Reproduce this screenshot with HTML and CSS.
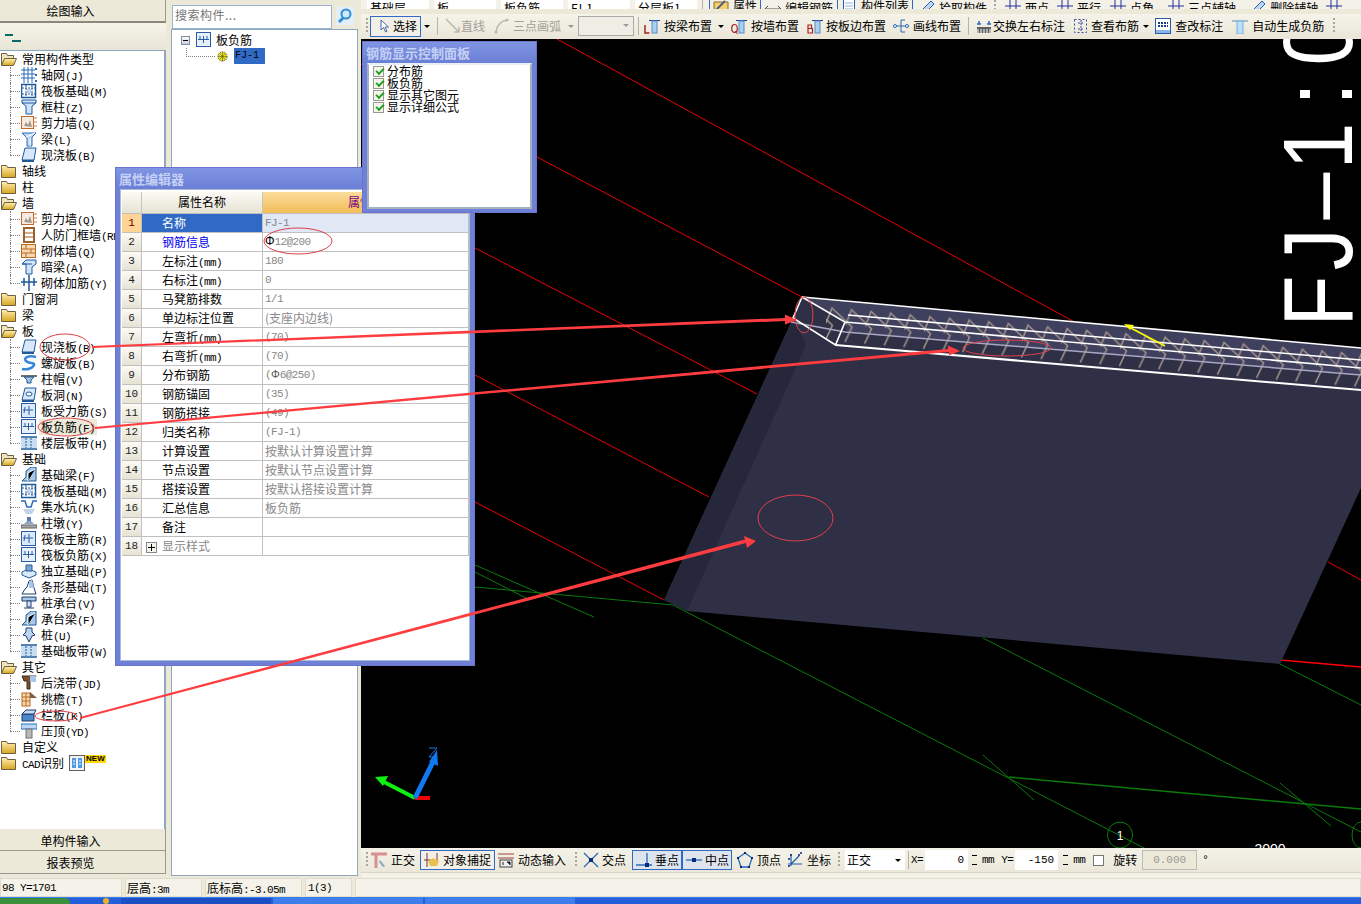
FILE: index.html
```html
<!DOCTYPE html>
<html lang="zh">
<head>
<meta charset="utf-8">
<title>钢筋显示控制面板</title>
<link rel="stylesheet" href="styles.css">
</head>
<body>
<svg class="defs" width="0" height="0" aria-hidden="true">
  <defs>
    <linearGradient id="fy" x1="0" y1="0" x2="0" y2="1"><stop offset="0" stop-color="#fff0b0"/><stop offset="1" stop-color="#d9a520"/></linearGradient>
    <symbol id="folder" viewBox="0 0 16 16"><path d="M.5 4.5V2.5h5l1 2h8v10H.5z" fill="url(#fy)" stroke="#6b6040"/></symbol>
    <symbol id="open" viewBox="0 0 16 16"><path d="M.5 14.500V2.500h5l1 2h6v3" fill="#f0e4b8" stroke="#6b6040"/><path d="M.5 14.500l3-7h12l-3 7z" fill="url(#fy)" stroke="#6b6040"/></symbol>
    <symbol id="grid" viewBox="0 0 16 16"><path d="M3 0v16M7 0v16M11 0v16M0 3h14M0 7h14M0 11h14" stroke="#2a6ab8" fill="none"/><path d="M14 1h2v2h-2zM14 7h2v2h-2zM14 13h2v2h-2z" fill="#2a6ab8"/></symbol>
    <symbol id="raft" viewBox="0 0 16 16"><rect x=".5" y="1.500" width="14" height="13" fill="#fff" stroke="#1e5a9a" stroke-width="1.500"/><path d="M1 5h13M1 11h13M5 2v12M11 2v12" stroke="#1e5a9a" stroke-dasharray="2 1" fill="none"/><rect x="6" y="6" width="4" height="4" fill="#bcd4f0"/></symbol>
    <symbol id="col" viewBox="0 0 16 16"><path d="M1 1h14v3L11 7v8H5V7L1 4z" fill="#cfe2f7" stroke="#1e5a9a"/><path d="M1 4h14" stroke="#1e5a9a"/></symbol>
    <symbol id="wall" viewBox="0 0 16 16"><rect x=".5" y="1.500" width="12" height="12" fill="#f4ece4" stroke="#c06a30"/><path d="M3 11l2-4 2 3 2-5 2 7z" fill="#a89888"/><path d="M13 3h3M13 7h3M13 11h3" stroke="#e08030"/></symbol>
    <symbol id="beam" viewBox="0 0 16 16"><path d="M1 2h14l-4 4v9H6V7z" fill="#bcd8f4" stroke="#2a6ab8"/><path d="M5 6l9-4M9 7v8" stroke="#fff"/></symbol>
    <symbol id="slab" viewBox="0 0 16 16"><path d="M4 1h11l-2 12H1z" fill="#d8e8fa" stroke="#1e5a9a"/><path d="M1 13h12v2H1z" fill="#1e5a9a"/></symbol>
    <symbol id="rebar" viewBox="0 0 16 16"><rect x=".5" y=".5" width="14" height="14" fill="#e6f0fb" stroke="#2a5ca8"/><path d="M2 7.500h11M7.500 4v7M4 4v3M11 4v3" stroke="#2a5ca8" fill="none"/></symbol>
    <symbol id="door" viewBox="0 0 16 16"><path d="M3 1h10v14H3z" fill="#fff" stroke="#a0602a" stroke-width="2"/><path d="M4 6h8M4 10h8" stroke="#a0602a"/></symbol>
    <symbol id="brick" viewBox="0 0 16 16"><rect x=".5" y="1.500" width="14" height="13" fill="#f8d8b0" stroke="#b86a28"/><path d="M1 6h13M1 10h13M5 2v4M10 6v4M5 10v4" stroke="#b86a28"/></symbol>
    <symbol id="lintel" viewBox="0 0 16 16"><path d="M1 5l4-4h10v4l-4 3v7H5V5z" fill="#d0e4f8" stroke="#1e5a9a"/><path d="M1 5h10" stroke="#1e5a9a"/></symbol>
    <symbol id="wrebar" viewBox="0 0 16 16"><path d="M0 7h16M8 0v16M3 3v8M13 3v8" stroke="#1e5a9a" stroke-width="1.500" fill="none"/></symbol>
    <symbol id="spiral" viewBox="0 0 16 16"><path d="M15 2C7 0 2 3 5 6s9 1 8 4-6 5-12 4" fill="none" stroke="#3a86d8" stroke-width="2.500"/></symbol>
    <symbol id="cap" viewBox="0 0 16 16"><path d="M0 4h16v2H0z" fill="#707070"/><path d="M3 6h10l-3 3v3H6V9z" fill="#a8c4e4" stroke="#1e5a9a"/></symbol>
    <symbol id="hole" viewBox="0 0 16 16"><path d="M4 1h11l-2 12H1z" fill="#d8e8fa" stroke="#1e5a9a"/><path d="M1 13h12v2H1z" fill="#1e5a9a"/><ellipse cx="8" cy="7" rx="3" ry="2" fill="#fff" stroke="#1e5a9a"/></symbol>
    <symbol id="force" viewBox="0 0 16 16"><rect x=".5" y=".5" width="14" height="14" fill="#dbe9f8" stroke="#2a5ca8"/><path d="M2 7h10M8 3v9M4 4l-1 6" stroke="#2a5ca8" fill="none"/></symbol>
    <symbol id="band" viewBox="0 0 16 16"><path d="M0 2h16M0 14h16" stroke="#1e5a9a" stroke-width="1.500"/><rect x="0" y="3" width="16" height="10" fill="#c8dcf2"/><path d="M5 3v10M10 3v10" stroke="#1e5a9a" stroke-dasharray="2 1"/></symbol>
    <symbol id="fbeam" viewBox="0 0 16 16"><path d="M1 14l4-4V4l5-4h5v14z" fill="#a8c8ea" stroke="#1e5a9a"/><path d="M7 14V6l7-4" stroke="#fff"/></symbol>
    <symbol id="pit" viewBox="0 0 16 16"><path d="M0 2h4l2 6h4l2-6h4" fill="none" stroke="#2a6ab8" stroke-width="1.500"/><path d="M2 10h12l-3 5H5z" fill="#c0d4ea"/></symbol>
    <symbol id="pier" viewBox="0 0 16 16"><path d="M6 2h4v4H6z" fill="#5a7ca8"/><path d="M3 9l3-3h4l3 3z" fill="#8aa4c4"/><path d="M0 10h16v3H0z" fill="#a8a8a8" stroke="#606060"/></symbol>
    <symbol id="found" viewBox="0 0 16 16"><path d="M1 9l6-3 8 3v3l-7 3-7-3z" fill="#dbe9f8" stroke="#1e5a9a"/><path d="M5 8V2h6v6z" fill="#7ca4d0" stroke="#1e5a9a"/></symbol>
    <symbol id="strip" viewBox="0 0 16 16"><path d="M1 15l3-5 2-2 2-6 3-1 2 8 2 6z" fill="#fff" stroke="#1e3a6a"/><path d="M8 2l3-1 2 8H8z" fill="#a8c8ea"/></symbol>
    <symbol id="pile" viewBox="0 0 16 16"><path d="M1 2h14v4H1z" fill="#a8c8ea" stroke="#1e3a6a"/><path d="M6 6h4v6H6zM3 13h10" fill="#cfe2f7" stroke="#1e3a6a"/></symbol>
    <symbol id="piles" viewBox="0 0 16 16"><path d="M5 1h6v4l3 3-3 1-3 6-3-6-3-1 3-3z" fill="#bcd4f0" stroke="#1e3a6a"/></symbol>
    <symbol id="post" viewBox="0 0 16 16"><path d="M1 1h14l-2 5H9v8H6V6H3z" fill="#7c5030" stroke="#3a2a20"/><path d="M9 1h6v6H9z" fill="#a8c8ea"/></symbol>
    <symbol id="eave" viewBox="0 0 16 16"><rect x="1" y="2" width="8" height="13" fill="#f8d8b0" stroke="#b86a28"/><path d="M1 6h8M1 10h8M5 2v13" stroke="#b86a28"/><path d="M9 1l7 6h-7z" fill="#806040"/></symbol>
    <symbol id="rail" viewBox="0 0 16 16"><path d="M1 7h12v7H1z" fill="#4a88c8" stroke="#1e3a6a"/><path d="M1 7l4-4h10l-2 4z" fill="#c8dcf2" stroke="#1e3a6a"/></symbol>
    <symbol id="coping" viewBox="0 0 16 16"><rect x="0" y="1" width="16" height="5" fill="#bcd8f4" stroke="#1e70c8"/><rect x="5" y="6" width="6" height="9" fill="#b8b8b8" stroke="#707070"/></symbol>
    <symbol id="cad" viewBox="0 0 16 16"><rect x=".5" y=".5" width="15" height="15" fill="#f4f4f4" stroke="#606060"/><path d="M3 3h4v10H3zM9 3h4v10H9z" fill="#4a98e8"/><path d="M4 6h2M4 9h2M10 6h2M10 9h2" stroke="#fff"/></symbol>
    <symbol id="gear" viewBox="0 0 12 12"><circle cx="6" cy="6" r="5" fill="#e8e020" stroke="#505020" stroke-dasharray="1.500 1"/><path d="M1 6h10M6 1v10M3 3l6 6M9 3l-6 6" stroke="#505020" stroke-width=".6"/></symbol>
    <symbol id="search" viewBox="0 0 18 18"><rect width="18" height="18" fill="#e4eef8"/><circle cx="10" cy="7" r="4.500" fill="#cfe8fb" stroke="#2f8fd8" stroke-width="2"/><path d="M7 11l-4 4" stroke="#2f8fd8" stroke-width="3"/></symbol>
    <symbol id="cursor" viewBox="0 0 16 16"><path d="M5 2v10l2.500-2.500 2 4.500 1.500-.8-2-4.200h3.500z" fill="#fff" stroke="#4a6a9a"/></symbol>
    <symbol id="line" viewBox="0 0 16 16"><path d="M1 1l13 13M9 14h5V9" fill="none" stroke="#b8b8b0" stroke-width="1.500"/></symbol>
    <symbol id="arc" viewBox="0 0 16 16"><path d="M2 14C3 7 7 3 13 2" fill="none" stroke="#b8b8b0" stroke-width="1.500"/><circle cx="2" cy="14" r="1.500" fill="#b8b8b0"/><circle cx="13" cy="2" r="1.500" fill="#b8b8b0"/></symbol>
    <symbol id="tL" viewBox="0 0 16 16"><path d="M5 2.500h11" stroke="#1e3a8a"/><rect x="8" y="3" width="5" height="12" fill="#a8d0f0" stroke="#5a8ac8"/><path d="M1 7v8h4.500" fill="none" stroke="#a82020" stroke-width="1.500"/></symbol>
    <symbol id="tQ" viewBox="0 0 16 16"><path d="M5 2.500h11" stroke="#1e3a8a"/><rect x="8" y="3" width="5" height="12" fill="#a8d0f0" stroke="#5a8ac8"/><ellipse cx="3.500" cy="10.500" rx="2.800" ry="4" fill="none" stroke="#a82020" stroke-width="1.200"/><path d="M4 13l2.500 3" stroke="#a82020"/></symbol>
    <symbol id="tB" viewBox="0 0 16 16"><path d="M5 2.500h11" stroke="#1e3a8a"/><rect x="8" y="3" width="5" height="12" fill="#a8d0f0" stroke="#5a8ac8"/><path d="M1 7h3.500v3.500H1zM1 10.500h4.500V15H1z" fill="none" stroke="#a82020" stroke-width="1.200"/></symbol>
    <symbol id="tline" viewBox="0 0 16 16"><path d="M2 8h12M8 2v12M8 2h4M8 14h4" stroke="#2a6ab8" fill="none"/><circle cx="2" cy="8" r="1.500" fill="#fff" stroke="#2a6ab8"/><circle cx="14" cy="8" r="1.500" fill="#fff" stroke="#2a6ab8"/></symbol>
    <symbol id="swap" viewBox="0 0 16 16"><rect x="1" y="9" width="14" height="6" fill="#606060"/><path d="M2 11v4M5 11v4M8 11v4M11 11v4M14 11v4" stroke="#fff"/><path d="M1 6h4M11 6h4M13 3v3M3 3v3" stroke="#2a6ab8" stroke-width="1.500"/></symbol>
    <symbol id="view" viewBox="0 0 16 16"><rect x="1.500" y="1.500" width="12" height="13" fill="none" stroke="#3a4a9a" stroke-dasharray="2 2"/><path d="M8 2v12M5 5h5M5 11h5" stroke="#3a4a9a" stroke-dasharray="2 1"/></symbol>
    <symbol id="abc" viewBox="0 0 16 16"><rect x=".5" y=".5" width="15" height="15" fill="#fff" stroke="#2a5ca8"/><rect x="1" y="12" width="14" height="3" fill="#8ab4e8"/><path d="M3 5h10M3 8h10" stroke="#1e3a8a" stroke-width="2" stroke-dasharray="2 1"/></symbol>
    <symbol id="auto" viewBox="0 0 16 16"><path d="M0 3h16" stroke="#5a8ac8"/><rect x="5" y="3" width="6" height="13" fill="#b8e0f8" stroke="#7ab0d8"/></symbol>
    <symbol id="ortho" viewBox="0 0 16 16"><path d="M0 2h16M5 2v14" stroke="#d89090" stroke-width="3"/><path d="M9 8l5 6-2 1-4-5z" fill="#8aa8c8"/></symbol>
    <symbol id="snap" viewBox="0 0 16 16"><path d="M3 1v14M0 8h8M13 1v8" stroke="#803030"/><path d="M4 9l5-3 6 3-2 5H6z" fill="#e8c050"/></symbol>
    <symbol id="dyn" viewBox="0 0 16 16"><path d="M0 2h16M0 6h16" stroke="#a04040"/><rect x="2" y="8" width="12" height="7" fill="#f0f0f0" stroke="#404040"/><path d="M5 10v3M9 10h3v3" stroke="#202020"/></symbol>
    <symbol id="cross" viewBox="0 0 16 16"><path d="M1 1l14 14M15 1L1 15" stroke="#2a6ab8" stroke-width="1.300"/><rect x="6" y="6" width="4" height="4" fill="#0a2a7a"/></symbol>
    <symbol id="perp" viewBox="0 0 16 16"><path d="M0 13h16M11 1v12" stroke="#2a6ab8" stroke-width="1.300"/><rect x="9" y="11" width="4" height="4" fill="#0a2a7a"/></symbol>
    <symbol id="mid" viewBox="0 0 16 16"><path d="M0 8h16" stroke="#2a6ab8" stroke-width="1.300"/><rect x="6" y="6" width="4" height="4" fill="#0a2a7a"/></symbol>
    <symbol id="vert" viewBox="0 0 16 16"><path d="M8 1l7 5-3 9H4L1 6z" fill="none" stroke="#2a6ab8" stroke-width="1.300"/><path d="M7 0h2v2H7zM0 5h2v2H0zM14 5h2v2h-2zM3 14h2v2H3zM11 14h2v2h-2z" fill="#0a2a7a"/></symbol>
    <symbol id="coord" viewBox="0 0 16 16"><path d="M4 2v12M1 12h14M4 12l8-8" stroke="#1e5ab0" fill="none" stroke-width="1.200"/><path d="M3 3h2M11 3h2M13 1h2M1 7h2M1 14h2" stroke="#0a2a7a" stroke-width="1.500"/></symbol>
    <symbol id="prop" viewBox="0 0 16 16"><path d="M1 4h14v10H1z" fill="#f4d070" stroke="#8a6a20"/><path d="M3 12l9-9" stroke="#506080" stroke-width="2"/></symbol>
    <symbol id="edit" viewBox="0 0 16 16"><path d="M0 9h16M3 6L0 9l3 3M13 6l3 3-3 3" fill="none" stroke="#505050"/></symbol>
    <symbol id="list" viewBox="0 0 16 16"><rect x="2.500" y="1.500" width="11" height="13" fill="#fff" stroke="#2a5ca8"/><path d="M4 5h8M4 8h8M4 11h8" stroke="#8ab4e8"/></symbol>
    <symbol id="pick" viewBox="0 0 16 16"><path d="M2 14l2-5 8-8 3 3-8 8z" fill="#bcd8f4" stroke="#2a5ca8"/></symbol>
    <symbol id="aux" viewBox="0 0 16 16"><path d="M0 6h16M5 0v14M11 0v14" stroke="#22309a"/><circle cx="5" cy="12" r="1.500" fill="#d02020"/></symbol>
  </defs>
</svg>

<div class="app">
  <div class="main">
    <aside class="left">
      <div class="tab">绘图输入</div>
      <div class="mini">
        <svg class="miniico" viewBox="0 0 16 9" aria-hidden="true"><path d="M0 1h8M7 7h9" stroke="#0a6a6a" stroke-width="2"/></svg>
      </div>
      <ul class="tree">
        <li class="fold"><svg class="ic"><use href="#open"/></svg>常用构件类型</li>
        <li class="it"><svg class="ic"><use href="#grid"/></svg>轴网<span class="lt">(J)</span></li>
        <li class="it"><svg class="ic"><use href="#raft"/></svg>筏板基础<span class="lt">(M)</span></li>
        <li class="it"><svg class="ic"><use href="#col"/></svg>框柱<span class="lt">(Z)</span></li>
        <li class="it"><svg class="ic"><use href="#wall"/></svg>剪力墙<span class="lt">(Q)</span></li>
        <li class="it"><svg class="ic"><use href="#beam"/></svg>梁<span class="lt">(L)</span></li>
        <li class="it end"><svg class="ic"><use href="#slab"/></svg>现浇板<span class="lt">(B)</span></li>
        <li class="fold"><svg class="ic"><use href="#folder"/></svg>轴线</li>
        <li class="fold"><svg class="ic"><use href="#folder"/></svg>柱</li>
        <li class="fold"><svg class="ic"><use href="#open"/></svg>墙</li>
        <li class="it"><svg class="ic"><use href="#wall"/></svg>剪力墙<span class="lt">(Q)</span></li>
        <li class="it"><svg class="ic"><use href="#door"/></svg>人防门框墙<span class="lt">(RF)</span></li>
        <li class="it"><svg class="ic"><use href="#brick"/></svg>砌体墙<span class="lt">(Q)</span></li>
        <li class="it"><svg class="ic"><use href="#lintel"/></svg>暗梁<span class="lt">(A)</span></li>
        <li class="it end"><svg class="ic"><use href="#wrebar"/></svg>砌体加筋<span class="lt">(Y)</span></li>
        <li class="fold"><svg class="ic"><use href="#folder"/></svg>门窗洞</li>
        <li class="fold"><svg class="ic"><use href="#folder"/></svg>梁</li>
        <li class="fold"><svg class="ic"><use href="#open"/></svg>板</li>
        <li class="it"><svg class="ic"><use href="#slab"/></svg>现浇板<span class="lt">(B)</span></li>
        <li class="it"><svg class="ic"><use href="#spiral"/></svg>螺旋板<span class="lt">(B)</span></li>
        <li class="it"><svg class="ic"><use href="#cap"/></svg>柱帽<span class="lt">(V)</span></li>
        <li class="it"><svg class="ic"><use href="#hole"/></svg>板洞<span class="lt">(N)</span></li>
        <li class="it"><svg class="ic"><use href="#force"/></svg>板受力筋<span class="lt">(S)</span></li>
        <li class="it"><svg class="ic"><use href="#rebar"/></svg><span class="sel">板负筋<span class="lt">(F)</span></span></li>
        <li class="it end"><svg class="ic"><use href="#band"/></svg>楼层板带<span class="lt">(H)</span></li>
        <li class="fold"><svg class="ic"><use href="#open"/></svg>基础</li>
        <li class="it"><svg class="ic"><use href="#fbeam"/></svg>基础梁<span class="lt">(F)</span></li>
        <li class="it"><svg class="ic"><use href="#raft"/></svg>筏板基础<span class="lt">(M)</span></li>
        <li class="it"><svg class="ic"><use href="#pit"/></svg>集水坑<span class="lt">(K)</span></li>
        <li class="it"><svg class="ic"><use href="#pier"/></svg>柱墩<span class="lt">(Y)</span></li>
        <li class="it"><svg class="ic"><use href="#force"/></svg>筏板主筋<span class="lt">(R)</span></li>
        <li class="it"><svg class="ic"><use href="#rebar"/></svg>筏板负筋<span class="lt">(X)</span></li>
        <li class="it"><svg class="ic"><use href="#found"/></svg>独立基础<span class="lt">(P)</span></li>
        <li class="it"><svg class="ic"><use href="#strip"/></svg>条形基础<span class="lt">(T)</span></li>
        <li class="it"><svg class="ic"><use href="#pile"/></svg>桩承台<span class="lt">(V)</span></li>
        <li class="it"><svg class="ic"><use href="#fbeam"/></svg>承台梁<span class="lt">(F)</span></li>
        <li class="it"><svg class="ic"><use href="#piles"/></svg>桩<span class="lt">(U)</span></li>
        <li class="it end"><svg class="ic"><use href="#band"/></svg>基础板带<span class="lt">(W)</span></li>
        <li class="fold"><svg class="ic"><use href="#open"/></svg>其它</li>
        <li class="it"><svg class="ic"><use href="#post"/></svg>后浇带<span class="lt">(JD)</span></li>
        <li class="it"><svg class="ic"><use href="#eave"/></svg>挑檐<span class="lt">(T)</span></li>
        <li class="it"><svg class="ic"><use href="#rail"/></svg>栏板<span class="lt">(K)</span></li>
        <li class="it end"><svg class="ic"><use href="#coping"/></svg>压顶<span class="lt">(YD)</span></li>
        <li class="fold"><svg class="ic"><use href="#folder"/></svg>自定义</li>
        <li class="fold"><svg class="ic"><use href="#folder"/></svg><span class="lt">CAD</span>识别<svg class="ic cad"><use href="#cad"/></svg><span class="new">NEW</span></li>
      </ul>
      <div class="tab2">单构件输入</div>
      <div class="tab2">报表预览</div>
    </aside>

    <section class="mid">
      <div class="searchrow">
        <div class="search">搜索构件...</div>
        <svg class="searchbtn"><use href="#search"/></svg>
      </div>
      <div class="midtree">
        <div class="mrow">
          <span class="minus"></span>
          <svg class="ic rootic"><use href="#rebar"/></svg>
          <span>板负筋</span>
        </div>
        <div class="mrow child">
          <svg class="gear"><use href="#gear"/></svg>
          <span class="picked">FJ-1</span>
        </div>
      </div>
    </section>

    <section class="right">
      <div class="tb1">
        <span class="cb">基础层</span><span class="cb">板</span><span class="cb">板负筋</span><span class="cb">FJ-1</span><span class="cb">分层板1</span>
        <span class="sep"></span>
        <span class="ti btn t6"><svg class="ic"><use href="#prop"/></svg>属性</span>
        <span class="ti g4"><svg class="ic"><use href="#edit"/></svg>编辑钢筋</span>
        <span class="ti btn g4"><svg class="ic"><use href="#list"/></svg>构件列表</span>
        <span class="ti g6"><svg class="ic"><use href="#pick"/></svg>拾取构件</span>
        <span class="grip g7"></span>
        <span class="ti g9"><svg class="ic"><use href="#aux"/></svg>两点</span>
        <span class="ti g8"><svg class="ic"><use href="#aux"/></svg>平行</span>
        <span class="ti g9"><svg class="ic"><use href="#aux"/></svg>点角</span>
        <span class="ti g14"><svg class="ic"><use href="#aux"/></svg>三点辅轴</span>
        <span class="ti g14"><svg class="ic"><use href="#pick"/></svg>删除辅轴</span>
        <span class="ti g8"><svg class="ic"><use href="#aux"/></svg></span>
      </div>
      <div class="tb2">
        <span class="grip"></span>
        <span class="ti btn sel1 g2"><svg class="ic"><use href="#cursor"/></svg>选择</span>
        <span class="arrow g3"></span>
        <span class="sep g7"></span>
        <span class="ti off gp0 g7"><svg class="ic"><use href="#line"/></svg>直线</span>
        <span class="ti off gp3 g9"><svg class="ic"><use href="#arc"/></svg>三点画弧</span>
        <span class="arrow off g7"></span>
        <span class="combo g4"></span>
        <span class="sep g4"></span>
        <span class="ti g5"><svg class="ic"><use href="#tL"/></svg>按梁布置</span>
        <span class="arrow g6"></span>
        <span class="ti g7"><svg class="ic"><use href="#tQ"/></svg>按墙布置</span>
        <span class="ti gp3 g8"><svg class="ic"><use href="#tB"/></svg>按板边布置</span>
        <span class="ti g7"><svg class="ic"><use href="#tline"/></svg>画线布置</span>
        <span class="sep g7"></span>
        <span class="ti gp1 g7"><svg class="ic"><use href="#swap"/></svg>交换左右标注</span>
        <span class="ti gp2 g8"><svg class="ic"><use href="#view"/></svg>查看布筋</span>
        <span class="arrow g4"></span>
        <span class="ti g6"><svg class="ic"><use href="#abc"/></svg>查改标注</span>
        <span class="ti g9"><svg class="ic"><use href="#auto"/></svg>自动生成负筋</span>
        <span class="grip g9"></span>
      </div>
      <div class="canvas">
        <svg class="scene" viewBox="361 39 1000 809" aria-hidden="false">
          <defs>
            <pattern id="hooks" patternUnits="userSpaceOnUse" width="19.600" height="80" patternTransform="translate(826 300) skewY(5)">
              <path d="M0 23L6 7.500 26 24.700 19 40.300M-19.600 23L-13.600 7.500 6.400 24.700-.6 40.300" fill="none" stroke="#a3968c" stroke-width="1.500"/>
            </pattern>
          </defs>
          <g class="redl">
            <path d="M557 39L1080 325M361 64L802 297M475 248L757 394M475 375L709 497M475 502L664 600M1328 562L1361 580"/>
            <path class="thick" d="M1280 660L1361 667"/>
          </g>
          <g class="greenl">
            <path d="M475 565L594 617M475 572L530 600M475 587L673 605M673 605L1144 848M983 638L1361 832M1280 664L1361 705M983 755L1034 800M1280 783L1331 826"/>
            <path class="thick" d="M1009 777L1361 809"/>
            <ellipse cx="1120" cy="835" rx="12.500" ry="13" fill="none"/>
            <ellipse cx="1361" cy="835" rx="9" ry="13" fill="none"/>
          </g>
          <polygon class="sl" points="793,318 802,297 1361,348 1361,488 1280,664 687,611 664,600"/>
          <polygon class="sl2" points="793,318 806,345 687,611 664,600"/>
          <polygon class="sl3" points="802,297 1361,348 1361,375 847,332 845,322"/>
          <polygon fill="url(#hooks)" points="826,302 1361,349 1361,395 826,348"/>
          <path class="lav" d="M791 322L845 332L1361 375"/>
          <g class="wh">
            <path d="M802 297L1361 348M848 315L1361 360M845 322L1361 368M802 297L845 322L835.500 345L793 318L802 297"/>
            <path class="wb" d="M835.500 345L1361 390"/>
          </g>
          <path class="yel" d="M1127 326L1165 346"/>
          <polygon class="yelf" points="1124,324 1134,325 1130,330"/>
          <text class="big" transform="translate(1352 320) rotate(-90) scale(.86 1)" x="-8 58 117 175 249 296" y="0">FJ–1:0</text>
          <text class="gridn" x="1120" y="840">1</text>
          <text class="gridd" x="1270" y="854">3000</text>
          <g class="axis">
            <path class="ax-g" d="M415 798L384 782"/>
            <polygon class="fg" points="375,777 388,776 383,786"/>
            <path class="ax-r" d="M415 798L430 798"/>
            <path class="ax-b" d="M415 798L433 762"/>
            <polygon class="fb" points="437,750 438,766 429,762"/>
          </g>
          <path class="zlab" d="M429 748h8l-8 9h8"/>
        </svg>
      </div>
      <div class="tb3">
        <span class="grip"></span>
        <span class="ti g3"><svg class="ic"><use href="#ortho"/></svg>正交</span>
        <span class="ti btn on g5"><svg class="ic"><use href="#snap"/></svg>对象捕捉</span>
        <span class="ti g3"><svg class="ic"><use href="#dyn"/></svg>动态输入</span>
        <span class="grip g9"></span>
        <span class="ti gp3 g6"><svg class="ic"><use href="#cross"/></svg>交点</span>
        <span class="ti btn on2 g6"><svg class="ic"><use href="#perp"/></svg>垂点</span>
        <span class="ti btn on2"><svg class="ic"><use href="#mid"/></svg>中点</span>
        <span class="ti g5"><svg class="ic"><use href="#vert"/></svg>顶点</span>
        <span class="ti g6"><svg class="ic"><use href="#coord"/></svg>坐标</span>
        <span class="grip g7"></span>
        <span class="field f60 g5">正交<span class="arrow dn"></span></span>
        <span class="sep g3"></span>
        <span class="lt g2">X=</span>
        <span class="field f43 num g2">0</span>
        <span class="spin g3"></span>
        <span class="lt g4">mm</span>
        <span class="lt g7">Y=</span>
        <span class="field f43 num g2">-150</span>
        <span class="spin g4"></span>
        <span class="lt g4">mm</span>
        <span class="check g8"></span>
        <span class="g9">旋转</span>
        <span class="field f55 num dis g5">0.000</span>
        <span class="lt g5">°</span>
      </div>
      <div class="tb4"></div>
    </section>
  </div>

  <footer class="status">
    <span class="cell c1 lt">98 Y=1701</span>
    <span class="cell c2">层高<span class="lt">:3m</span></span>
    <span class="cell c3">底标高<span class="lt">:-3.05m</span></span>
    <span class="cell c4 lt">1(3)</span>
    <span class="cell c5"></span>
  </footer>
  <div class="taskbar"><span class="start"></span><span class="tray"></span><span class="task"></span><span class="task t2"></span><span class="task t3"></span></div>
</div>

<div class="win prop">
  <div class="wtitle">属性编辑器</div>
  <div class="wbody">
    <table class="pt">
      <colgroup><col class="c-n"><col class="c-k"><col class="c-v"></colgroup>
      <thead><tr><th class="h0"></th><th class="h1">属性名称</th><th class="h2">属性值</th></tr></thead>
      <tbody>
        <tr class="cur"><td class="n">1</td><td class="k">名称</td><td class="v lt">FJ-1</td></tr>
        <tr><td class="n">2</td><td class="k blue">钢筋信息</td><td class="v lt"><b class="phi">Φ</b>12@200</td></tr>
        <tr><td class="n">3</td><td class="k">左标注<span class="lt">(mm)</span></td><td class="v lt">180</td></tr>
        <tr><td class="n">4</td><td class="k">右标注<span class="lt">(mm)</span></td><td class="v lt">0</td></tr>
        <tr><td class="n">5</td><td class="k">马凳筋排数</td><td class="v lt">1/1</td></tr>
        <tr><td class="n">6</td><td class="k">单边标注位置</td><td class="v">(支座内边线)</td></tr>
        <tr><td class="n">7</td><td class="k">左弯折<span class="lt">(mm)</span></td><td class="v lt">(70)</td></tr>
        <tr><td class="n">8</td><td class="k">右弯折<span class="lt">(mm)</span></td><td class="v lt">(70)</td></tr>
        <tr><td class="n">9</td><td class="k">分布钢筋</td><td class="v lt">(<b class="phi2">Φ</b>6@250)</td></tr>
        <tr><td class="n">10</td><td class="k">钢筋锚固</td><td class="v lt">(35)</td></tr>
        <tr><td class="n">11</td><td class="k">钢筋搭接</td><td class="v lt">(49)</td></tr>
        <tr><td class="n">12</td><td class="k">归类名称</td><td class="v lt">(FJ-1)</td></tr>
        <tr><td class="n">13</td><td class="k">计算设置</td><td class="v">按默认计算设置计算</td></tr>
        <tr><td class="n">14</td><td class="k">节点设置</td><td class="v">按默认节点设置计算</td></tr>
        <tr><td class="n">15</td><td class="k">搭接设置</td><td class="v">按默认搭接设置计算</td></tr>
        <tr><td class="n">16</td><td class="k">汇总信息</td><td class="v">板负筋</td></tr>
        <tr><td class="n">17</td><td class="k">备注</td><td class="v"></td></tr>
        <tr><td class="n">18</td><td class="k gray"><span class="plus"></span>显示样式</td><td class="v"></td></tr>
      </tbody>
    </table>
  </div>
</div>

<div class="win ctrl">
  <div class="wtitle">钢筋显示控制面板</div>
  <div class="wbody cbody">
    <div class="chk"><span class="box"></span>分布筋</div>
    <div class="chk"><span class="box"></span>板负筋</div>
    <div class="chk"><span class="box"></span>显示其它图元</div>
    <div class="chk"><span class="box"></span>显示详细公式</div>
  </div>
</div>

<svg class="notes" viewBox="0 0 1361 904" aria-hidden="true">
  <polygon class="nf" points="92,346 785,318 785,314.500 797,320 785,324.500 785,321 92,348"/>
  <polygon class="nf" points="95,427 948,349 948,345.500 960,351 949,355.500 949,352 95,429"/>
  <polygon class="nf" points="80,717 745,539.500 744,536 756,541 747,548 746,543 80,719"/>
  <ellipse class="ne" cx="65" cy="347" rx="25" ry="13"/>
  <ellipse class="ne" cx="66" cy="427" rx="28" ry="9"/>
  <ellipse class="ne" cx="56" cy="716" rx="21" ry="5"/>
  <ellipse class="ne" cx="298" cy="241" rx="34" ry="13"/>
  <ellipse class="ne" cx="1007" cy="348" rx="44" ry="8"/>
  <ellipse class="ne" cx="804" cy="315" rx="9" ry="18"/>
  <ellipse class="ne" cx="795.500" cy="518" rx="37.500" ry="23"/>
</svg>
</body>
</html>
```

FILE: styles.css
```css
* { box-sizing: border-box; }
html, body { margin: 0; padding: 0; width: 1361px; height: 904px; overflow: hidden; background: #ece9d8; }
body { font: 12px/16px "Noto Sans CJK SC", "Liberation Sans", sans-serif; color: #000; position: relative; }
.defs { position: absolute; }
ul { list-style: none; margin: 0; padding: 0; }
.lt { font-family: "Liberation Mono", "Noto Sans CJK SC", monospace; font-size: 11px; letter-spacing: -.6px; line-height: 1; }

.app { display: flex; flex-direction: column; height: 904px; }
.main { display: flex; height: 878px; }

/* left column */
.left { width: 166px; display: flex; flex-direction: column; }
.tab { height: 23px; line-height: 22px; text-align: center; padding-right: 24px; background: #ece9d8; border-bottom: 2px solid #8a897c; border-right: 1px solid #9a9a8c; }
.mini { height: 27px; background: linear-gradient(#f6f4ea, #e8e5d6); padding: 11px 5px 0; }
.miniico { display: block; width: 16px; height: 9px; }
.tree { height: 779px; background: #fff; border-top: 1px solid #8ea8c4; border-right: 2px solid #8ea8c4; overflow: hidden; }
.tree li { height: 16px; line-height: 16px; white-space: nowrap; display: block; position: relative; overflow: hidden; }
.tree .ic { vertical-align: top; margin-right: 4px; }
.fold { padding-left: 1px; }
.fold .ic { margin-right: 5px; }
.it { padding-left: 21px; }
.it::before { content: ""; position: absolute; left: 10px; top: 0; height: 16px; border-left: 1px dotted #808080; }
.it.end::before { height: 8px; }
.it::after { content: ""; position: absolute; left: 10px; top: 8px; width: 10px; border-top: 1px dotted #808080; }
.ic { width: 16px; height: 16px; flex: none; }
.sel { background: #ece9d8; display: inline-block; height: 16px; padding: 0 2px; margin-left: -2px; }
.tree .cad { margin-left: 5px; margin-right: 0; }
.new { display: inline-block; vertical-align: top; font: 700 8px/8px "Liberation Sans", sans-serif; color: #000; background: #ffd800; padding: 0 1px; }
.tab2 { height: 22px; line-height: 23px; text-align: center; padding-right: 24px; background: #ece9d8; border-bottom: 1px solid #9a9a8c; border-right: 1px solid #9a9a8c; }
.tab2:last-child { height: 23px; }

/* middle column */
.mid { width: 195px; padding: 0 3px 2px 5px; display: flex; flex-direction: column; }
.searchrow { height: 29px; padding: 5px 0 0 1px; display: flex; gap: 4px; }
.search { width: 160px; height: 24px; background: #fff; border: 1px solid #9ab4cc; color: #777; line-height: 18px; padding-left: 2px; font-size: 12px; letter-spacing: .5px; }
.searchbtn { width: 18px; height: 18px; margin-top: 2px; }
.midtree { flex: 1; background: #fff; border: 1px solid #8ea8c4; padding-top: 2px; }
.mrow { height: 16px; display: flex; align-items: center; position: relative; gap: 6px; }
.minus { width: 9px; height: 9px; margin-left: 9px; border: 1px solid #7a8ea8; background: linear-gradient(#fff, #ccd); position: relative; }
.minus::after { content: ""; position: absolute; left: 1px; right: 1px; top: 3px; border-top: 1px solid #000; }
.rootic { margin-right: -2px; }
.child { padding-left: 45px; }
.child::before { content: ""; position: absolute; left: 14px; top: 0; height: 8px; width: 28px; border-left: 1px dotted #808080; border-bottom: 1px dotted #808080; }
.gear { width: 11px; height: 11px; flex: none; }
.picked { background: #316ac5; color: #000; padding: 0 2px 0 1px; width: 31px; font: 10px/16px "Liberation Mono", monospace; }

/* right column */
.right { flex: 1; display: flex; flex-direction: column; min-width: 0; }
.ti { display: inline-flex; align-items: center; gap: 4px; white-space: nowrap; flex: none; }
.gp0 { gap: 0; } .gp1 { gap: 1px; } .gp2 { gap: 2px; } .gp3 { gap: 3px; }
.tb1 { height: 9px; overflow: hidden; display: flex; align-items: flex-end; padding-left: 6px; background: #f4f2e8; }
.tb1 > * { margin-bottom: -7px; }
.cb { width: 62px; height: 16px; margin-right: 5px; background: #fff; padding-left: 3px; line-height: 16px; flex: none; }
.tb2 { margin-top: 5px; height: 25px; width: 1000px; display: flex; align-items: center; padding: 0 0 1px 5px; background: linear-gradient(#f6f4ea, #e9e6d8); }
.grip { width: 2px; height: 16px; flex: none; background: repeating-linear-gradient(#a8a698 0 2px, transparent 2px 4px); }
.btn { padding: 0 3px; height: 21px; }
.sel1 { width: 51px; padding-left: 5px; gap: 1px; border: 1px solid #316ac5; background: #f2f0e6; }
.tb1 .btn { border: 1px solid #316ac5; background: #f2f0e6; }
.sep { width: 1px; height: 18px; background: #b6b4a6; flex: none; }
.arrow { width: 0; height: 0; border: 3px solid transparent; border-top: 3px solid #000; border-bottom: 0; flex: none; }
.arrow.off { border-top-color: #999; }
.off { color: #a0a098; }
.combo { width: 56px; height: 20px; background: #f0eee4; border: 1px solid #aaa; flex: none; position: relative; }
.combo::after { content: ""; position: absolute; right: 4px; top: 7px; border: 3px solid transparent; border-top-color: #999; border-bottom: 0; }
.g2 { margin-left: 2px; } .g3 { margin-left: 3px; } .g4 { margin-left: 4px; } .g5 { margin-left: 5px; }
.g6, .t6 { margin-left: 6px; } .g7 { margin-left: 7px; } .g8 { margin-left: 8px; } .g9 { margin-left: 9px; }
.g14 { margin-left: 14px; }

.canvas { flex: none; height: 809px; background: #000; overflow: hidden; }
.scene { display: block; width: 1000px; height: 809px; }
.redl path { stroke: #e80000; fill: none; stroke-width: 1; }
.redl .thick { stroke-width: 1.500; stroke: #f00; }
.greenl path, .greenl ellipse { stroke: #0a7a0a; fill: none; stroke-width: 1; }
.greenl .thick { stroke-width: 1.500; }
.sl { fill: #2f2f46; }
.sl2 { fill: #27273b; }
.sl3 { fill: #3f3f5e; }
.wh path { stroke: #fff; stroke-width: 1.600; fill: none; }
.wh .wb { stroke-width: 2; }
.lav { stroke: #a8a8c4; stroke-width: 1.500; fill: none; }
.yel { stroke: #ffff00; stroke-width: 1.500; fill: none; }
.yelf { fill: #ffff00; }
.big { font: 98px "Liberation Sans", sans-serif; fill: #fff; }
.gridn { font: 12px "Liberation Sans", sans-serif; fill: #fff; text-anchor: middle; }
.gridd { font: 14px "Liberation Sans", sans-serif; fill: #fff; text-anchor: middle; }
.ax-g { stroke: #10f010; stroke-width: 4; }
.ax-r { stroke: #f00000; stroke-width: 4; }
.ax-b { stroke: #1078f0; stroke-width: 5; }
.fg { fill: #10f010; }
.fb { fill: #1078f0; }
.zlab { stroke: #1078f0; fill: none; }

.tb3 { height: 24px; display: flex; align-items: center; padding-left: 5px; background: linear-gradient(#f4f2e8, #ebe8da); overflow: hidden; }
.tb3 .on { height: 20px; gap: 3px; border: 1px solid #316ac5; background: #f2f0e6; }
.tb3 .on2 { height: 20px; width: 50px; gap: 3px; border: 1px solid #316ac5; background: #dde4ee; }
.tb4 { height: 6px; background: #f4f2e8; border-top: 1px solid #d8d6c6; }
.field { display: inline-flex; align-items: center; height: 20px; background: #fff; flex: none; position: relative; padding-left: 2px; }
.f60 { width: 60px; justify-content: space-between; padding-right: 4px; }
.f43 { width: 43px; }
.f55 { width: 55px; }
.num { justify-content: flex-end; padding-right: 4px; font: 11px "Liberation Mono", monospace; }
.dis { background: #ece9d8; border: 1px solid #bbb; color: #999; justify-content: center; padding: 0; }
.spin { width: 7px; height: 14px; flex: none; background: linear-gradient(#000, #000) center 2px / 5px 1px no-repeat, linear-gradient(#000, #000) center 11px / 5px 1px no-repeat; }
.check { width: 11px; height: 11px; border: 1px solid #777; background: #fff; flex: none; }

/* status and taskbar */
.status { height: 19px; display: flex; gap: 3px; background: #ece9d8; }
.cell { background: #f5f3e9; border: 1px solid #dedccc; line-height: 18px; white-space: nowrap; flex: none; }
.c1 { width: 122px; padding-left: 1px; line-height: 18px; }
.c2 { width: 77px; padding-left: 1px; }
.c3 { width: 97px; padding-left: 1px; }
.c4 { width: 47px; padding-left: 2px; line-height: 18px; }
.c5 { flex: 1; }
.taskbar { flex: 1; display: flex; background: #245edb; border-top: 1px solid #3a80ee; }
.start { width: 70px; background: #3c8f3c; border-radius: 0 5px 0 0; flex: none; }
.tray { width: 6px; height: 6px; background: #f0b020; border-radius: 3px; margin-left: 33px; flex: none; }
.task { width: 150px; margin-left: 12px; background: #1c4fc4; flex: none; }
.t2, .t3 { margin-left: 2px; background: #3c7fea; }

/* floating windows */
.win { position: absolute; border: 1px solid #6a74cc; background: #6f80d8; display: flex; flex-direction: column; }
.prop { left: 115px; top: 167px; width: 360px; height: 499px; padding: 0 4px 4px; }
.ctrl { left: 362px; top: 41px; width: 175px; height: 172px; padding: 0 4px 3px; }
.wtitle { height: 21px; line-height: 22px; font-size: 13px; color: #c4d0f4; font-weight: 700; background: linear-gradient(#7f95e2, #6b7fd6); margin: 0 -4px; padding-left: 3px; flex: none; }
.wbody { flex: 1; background: #fff; border: 1px solid #a8bcd4; padding: 2px 1px; }
.cbody { border: 2px solid #a4b0bc; border-top-color: #e8eef4; padding: 0 0 0 4px; }
.chk { height: 12px; line-height: 12px; display: flex; gap: 3px; align-items: center; white-space: nowrap; }
.box { width: 11px; height: 11px; border: 1px solid #9a9a90; background: #f4f4ec; position: relative; flex: none; }
.box::after { content: ""; position: absolute; left: 2px; top: 1px; width: 6px; height: 3px; border-left: 2px solid #20a020; border-bottom: 2px solid #20a020; transform: rotate(-45deg); }

.pt { table-layout: fixed; border-collapse: separate; border-spacing: 0; width: 347px; }
.c-n { width: 20px; } .c-k { width: 121px; }
.pt th { height: 22px; font-weight: 400; padding: 0 0 2px; line-height: 16px; }
.h0, .h1 { background: linear-gradient(#fbfaf4, #e6e3d4); border-right: 1px solid #c4c4b8; border-bottom: 1px solid #c0c0c0; }
.h2 { background: linear-gradient(#fbdc9c, #f3bd58); color: #7a007a; border-bottom: 1px solid #c0c0c0; }
.pt td { height: 19px; max-height: 19px; padding: 0; border-right: 1px solid #c0c0c0; border-bottom: 1px solid #c0c0c0; line-height: 14px; white-space: nowrap; overflow: hidden; vertical-align: middle; }
.n { text-align: center; background: linear-gradient(#fbfaf4, #e6e3d4); font: 11px/14px "Liberation Mono", monospace; color: #222; }
.k { padding-left: 20px !important; }
.v { padding-left: 2px !important; color: #888; }
.cur .n { background: #ffd596; color: #600; }
.cur .k { background: #316ac5; color: #fff; }
.cur .v { background: #dfe8f4; }
.blue { color: #0000f0; }
.gray { color: #888; padding-left: 4px !important; }
.plus { display: inline-block; vertical-align: -2px; width: 11px; height: 11px; margin-right: 5px; border: 1px solid #888; background: linear-gradient(#000, #000) center / 7px 1px no-repeat, linear-gradient(#000, #000) center / 1px 7px no-repeat, #f4f4ec; }
.phi { color: #000; font: 400 12px/12px "Liberation Sans", sans-serif; letter-spacing: 0; }
.phi2 { font: 400 11px/11px "Liberation Sans", sans-serif; color: #555; letter-spacing: 0; }

.notes { position: absolute; left: 0; top: 0; width: 1361px; height: 904px; pointer-events: none; }
.nf { fill: #ff3c40; }
.ne { fill: none; stroke: #e0404a; stroke-width: 1; }
```
